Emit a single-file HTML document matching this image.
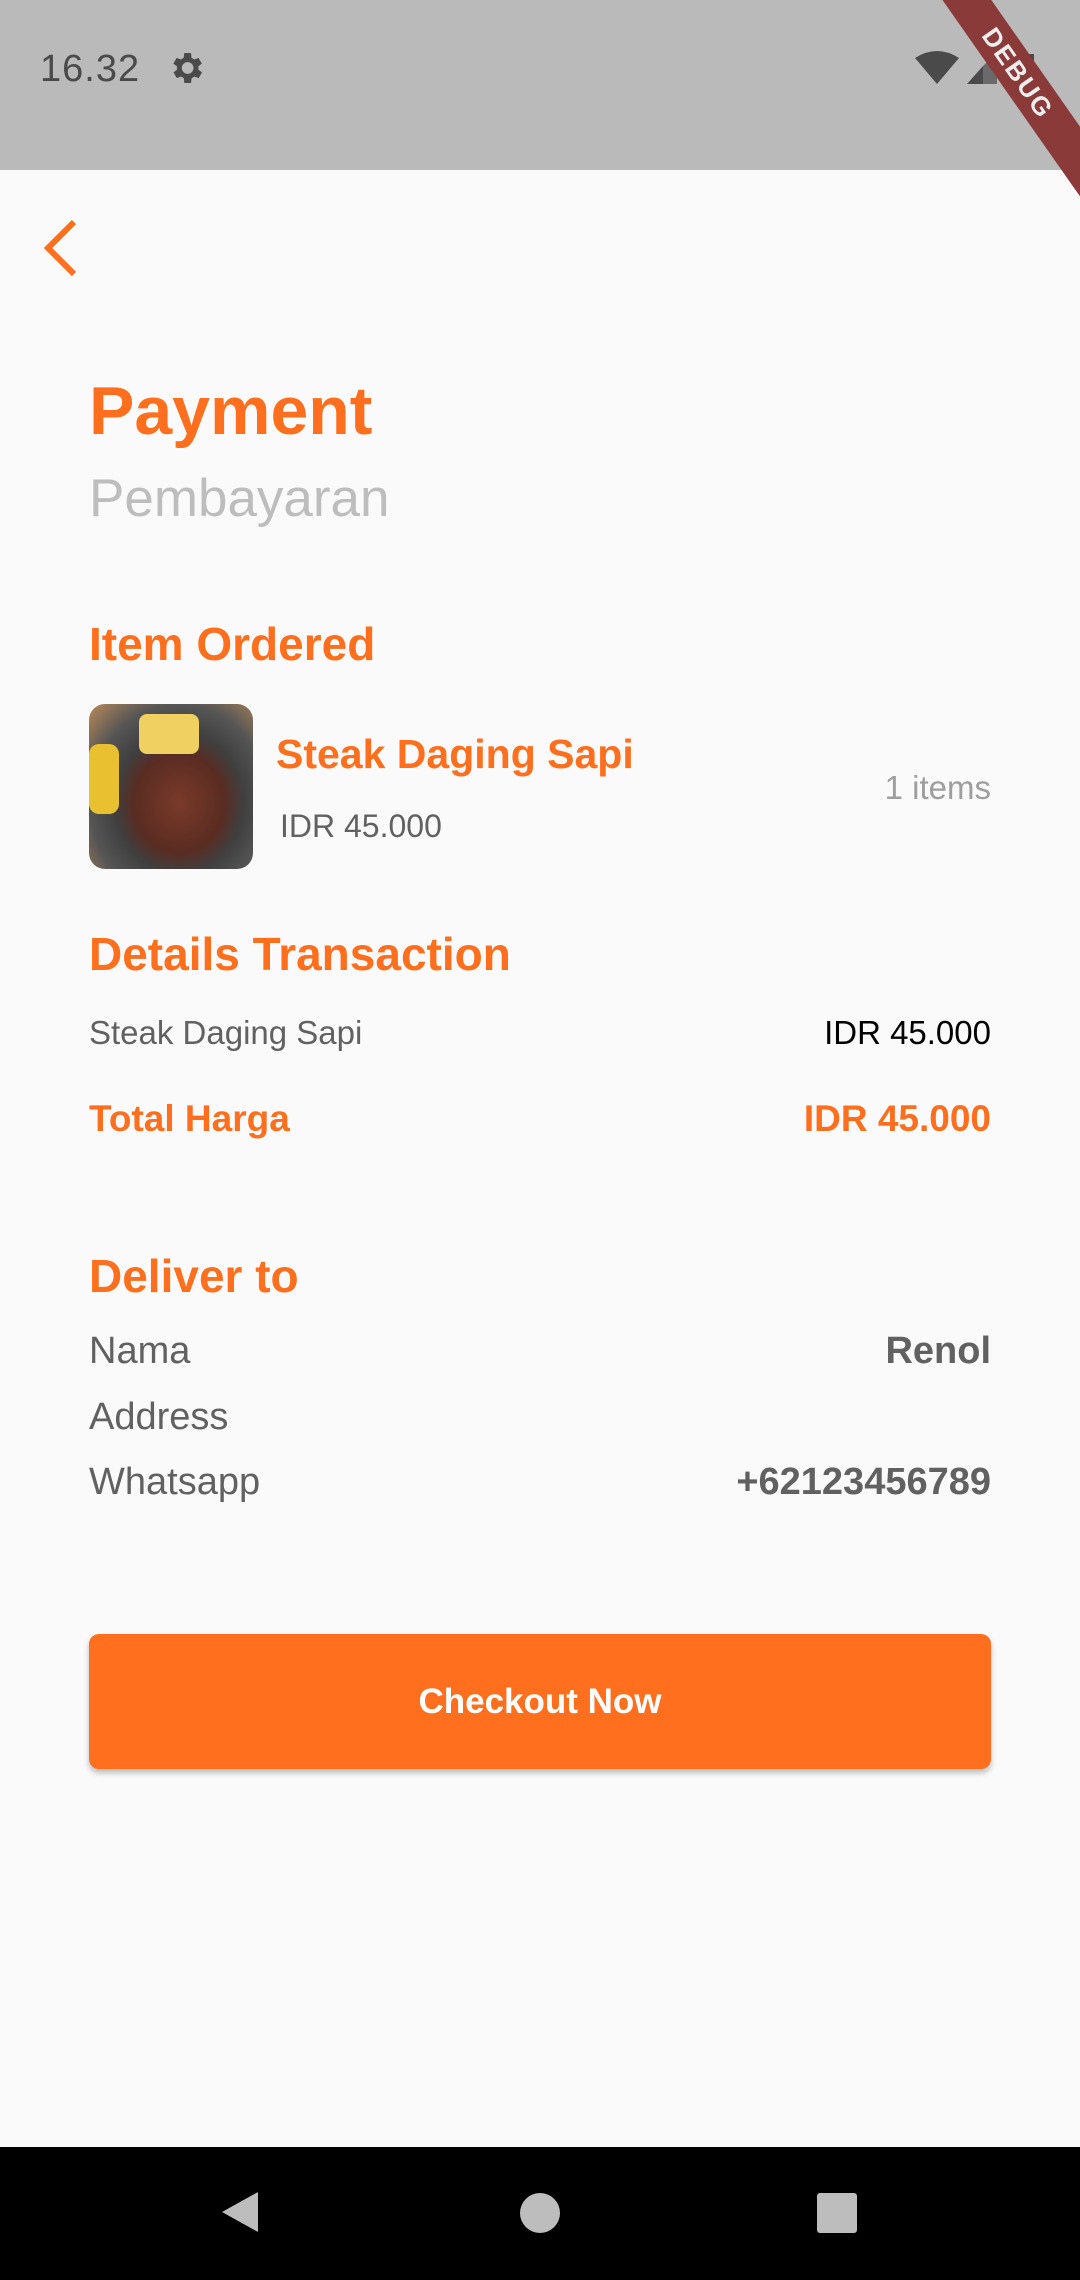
<!DOCTYPE html>
<html><head><meta charset="utf-8"><style>
body{margin:0;width:1080px;height:2280px;background:#fafafa;font-family:"Liberation Sans",sans-serif;position:relative;overflow:hidden}
.a{position:absolute;white-space:nowrap;line-height:1}
.o{color:#ff6f1e;font-weight:bold}
.g{color:#616161}
.r{right:89px;text-align:right}
</style></head><body>
<div style="position:absolute;left:0;top:0;width:1080px;height:170px;background:#bababa"></div>
<div class="a" style="left:40px;top:50px;font-size:38px;color:#4a4a4a;letter-spacing:1px">16.32</div>
<svg style="position:absolute;left:166px;top:48px" width="40" height="40" viewBox="0 0 24 24"><path fill="#4a4a4a" d="M19.4 13a7.5 7.5 0 000-2l2.1-1.6-2-3.5-2.5 1a7 7 0 00-1.7-1L15 3h-4l-.4 2.9a7 7 0 00-1.7 1l-2.5-1-2 3.5L6.6 11a7.5 7.5 0 000 2l-2.1 1.6 2 3.5 2.5-1a7 7 0 001.7 1L11 21h4l.4-2.9a7 7 0 001.7-1l2.5 1 2-3.5zM13 15.5a3.5 3.5 0 110-7 3.5 3.5 0 010 7z"/></svg>
<svg style="position:absolute;left:915px;top:50px" width="130" height="36" viewBox="0 0 130 36"><path fill="#4a4a4a" d="M0 8Q22-6 44 8L22 34z"/><path fill="#4a4a4a" d="M52 34L68 16V34z"/><path fill="#6a6a6a" d="M68 16L82 2V34H68z"/><rect x="105" y="4" width="14" height="30" fill="#4a4a4a"/></svg>
<div style="position:absolute;left:858px;top:53px;width:320px;height:40px;background:#8b3a3a;transform:rotate(55deg);transform-origin:center;color:#eee;font-weight:bold;font-size:26px;text-align:center;line-height:40px;letter-spacing:2px">DEBUG</div>
<svg style="position:absolute;left:40px;top:218px" width="40" height="60" viewBox="0 0 40 60"><path d="M34 4L8 30l26 26" stroke="#ff6f1e" stroke-width="6" fill="none"/></svg>
<div class="a o" style="left:89px;top:377px;font-size:68px">Payment</div>
<div class="a" style="left:89px;top:472px;font-size:53px;color:#bdbdbd">Pembayaran</div>
<div class="a o" style="left:89px;top:621px;font-size:46px">Item Ordered</div>
<div style="position:absolute;left:89px;top:704px;width:164px;height:165px;border-radius:16px;overflow:hidden;background:radial-gradient(ellipse at 55% 60%,#7a3a2a 0,#5a2c22 35%,#3f3f3f 50%,#555 70%,#b98a5a 100%)"><div style="position:absolute;left:0;top:40px;width:30px;height:70px;background:#e8c030;border-radius:10px"></div><div style="position:absolute;left:50px;top:10px;width:60px;height:40px;background:#f0d060;border-radius:8px"></div></div>
<div class="a o" style="left:276px;top:734px;font-size:41px">Steak Daging Sapi</div>
<div class="a g" style="left:280px;top:810px;font-size:32px">IDR 45.000</div>
<div class="a r" style="top:771px;font-size:33px;color:#9e9e9e">1 items</div>
<div class="a o" style="left:89px;top:931px;font-size:46px">Details Transaction</div>
<div class="a g" style="left:89px;top:1016px;font-size:33px">Steak Daging Sapi</div>
<div class="a r" style="top:1016px;font-size:33px;color:#000">IDR 45.000</div>
<div class="a o" style="left:89px;top:1100px;font-size:37px">Total Harga</div>
<div class="a o r" style="top:1100px;font-size:37px">IDR 45.000</div>
<div class="a o" style="left:89px;top:1253px;font-size:46px">Deliver to</div>
<div class="a g" style="left:89px;top:1332px;font-size:38px">Nama</div>
<div class="a g r" style="top:1332px;font-size:38px;font-weight:bold">Renol</div>
<div class="a g" style="left:89px;top:1398px;font-size:38px">Address</div>
<div class="a g" style="left:89px;top:1463px;font-size:38px">Whatsapp</div>
<div class="a g r" style="top:1463px;font-size:38px;font-weight:bold">+62123456789</div>
<div style="position:absolute;left:89px;top:1634px;width:902px;height:135px;border-radius:10px;background:#ff6f1e;box-shadow:0 4px 6px rgba(0,0,0,.25);color:#fff;font-weight:bold;font-size:35px;text-align:center;line-height:135px">Checkout Now</div>
<div style="position:absolute;left:0;top:2147px;width:1080px;height:133px;background:#000"></div>
<svg style="position:absolute;left:218px;top:2190px" width="44" height="44" viewBox="0 0 44 44"><path d="M40 2V42L4 22z" fill="#bdbdbd"/></svg>
<div style="position:absolute;left:520px;top:2193px;width:40px;height:40px;border-radius:50%;background:#bdbdbd"></div>
<div style="position:absolute;left:817px;top:2193px;width:40px;height:40px;border-radius:3px;background:#bdbdbd"></div>
</body></html>
